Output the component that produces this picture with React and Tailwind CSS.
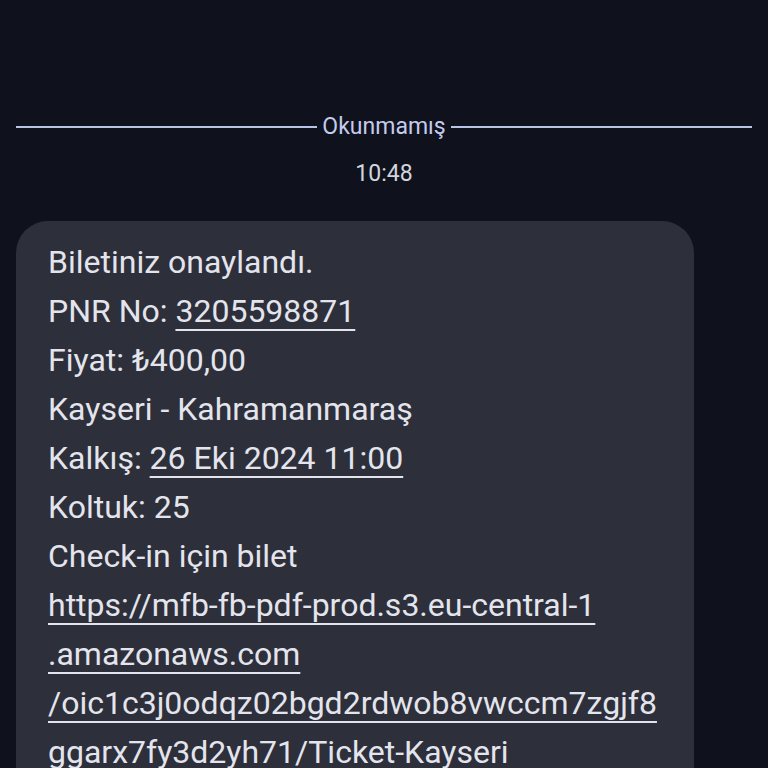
import React from 'react';

const lines = [
  { text: "Biletiniz onaylandı." },
  { label: "PNR No: ", link: "3205598871" },
  { text: "Fiyat: ₺400,00" },
  { text: "Kayseri - Kahramanmaraş" },
  { label: "Kalkış: ", link: "26 Eki 2024 11:00" },
  { text: "Koltuk: 25" },
  { text: "Check-in için bilet" },
  { link: "https://mfb-fb-pdf-prod.s3.eu-central-1" },
  { link: ".amazonaws.com" },
  { link: "/oic1c3j0odqz02bgd2rdwob8vwccm7zgjf8" },
  { link: "ggarx7fy3d2yh71/Ticket-Kayseri" },
];

const Link = ({ children }) => (
  <span className="underline decoration-2 underline-offset-[7px]">{children}</span>
);

export default function App() {
  return (
    <div className="w-[768px] h-[768px] overflow-hidden bg-[#0f121c] pt-[113px]" style={{ fontFamily: "Roboto, 'Noto Sans', sans-serif" }}>
      <div className="flex items-center px-4 gap-[5px]">
        <div className="flex-1 h-[2px] bg-[#b9c3e6]" />
        <span className="text-[23px] leading-7 text-[#c4cbec]">Okunmamış</span>
        <div className="flex-1 h-[2px] bg-[#b9c3e6]" />
      </div>
      <p className="text-center text-[23px] leading-7 text-[#d3d5de] mt-[19px]">10:48</p>
      <div className="ml-4 mt-[33px] w-[678px] rounded-[32px] bg-[#2d2f3b] pl-8 pt-[17px] pb-8 text-[32px] leading-[49px] text-[#e4e5ec]">
        {lines.map((l, i) => (
          <div key={i} className="whitespace-nowrap">
            {l.text}
            {l.label}
            {l.link && <Link>{l.link}</Link>}
          </div>
        ))}
      </div>
    </div>
  );
}
